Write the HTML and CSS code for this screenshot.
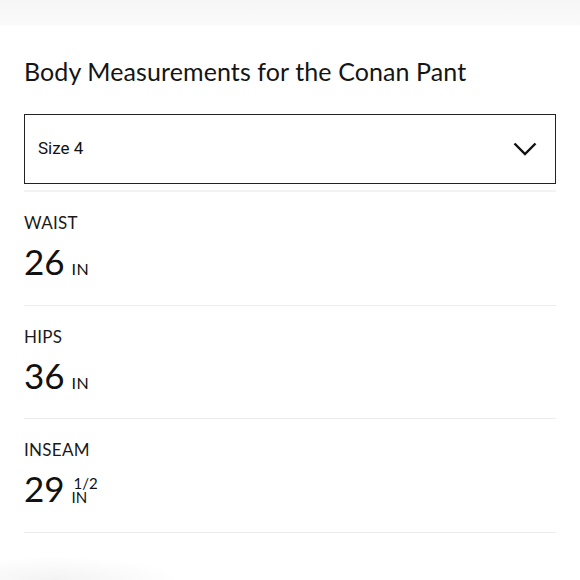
FILE: index.html
```html
<!DOCTYPE html>
<html>
<head>
<meta charset="utf-8">
<link rel="stylesheet" href="styles.css">
</head>
<body>
<div class="topband"></div>
<main class="panel">
  <h1 class="title">Body Measurements for the Conan Pant</h1>
  <div class="select">
    <span class="select-label">Size 4</span>
    <svg class="chev" width="24" height="14" viewBox="0 0 24 14"><path d="M1.5 1.5 L12 12 L22.5 1.5" fill="none" stroke="#111" stroke-width="2.4"/></svg>
  </div>
  <div class="rule first"></div>
  <section class="row">
    <div class="label">WAIST</div>
    <div class="value"><span class="num">26</span><span class="unit">IN</span></div>
  </section>
  <section class="row">
    <div class="label">HIPS</div>
    <div class="value"><span class="num">36</span><span class="unit">IN</span></div>
  </section>
  <section class="row">
    <div class="label">INSEAM</div>
    <div class="value"><span class="num">29</span><span class="frac"><span class="fr-top">1/2</span><span class="fr-bot">IN</span></span></div>
  </section>
</main>
<div class="bottomblob"></div>
</body>
</html>
```
FILE: styles.css
```css
* { box-sizing: border-box; }
html, body { margin: 0; padding: 0; background: #fff; }
body { width: 580px; height: 580px; overflow: hidden; position: relative; font-family: "Lato", "Liberation Sans", sans-serif; color: #111; }
.topband { height: 25px; background: linear-gradient(180deg, #f6f6f6, #fafafa); }
.panel { padding: 0 24px; }
.title { margin: 0; padding-top: 30px; font-weight: 400; font-size: 25px; line-height: 32px; letter-spacing: 0.1px; color: #151515; }
.select { margin-top: 27px; height: 70px; border: 1.5px solid #222; display: flex; align-items: center; justify-content: space-between; padding: 0 18px 0 13px; }
.select-label { font-family: "Roboto", "Liberation Sans", sans-serif; font-size: 17px; line-height: 20px; margin-top: -2px; color: #111; }
.chev { display: block; }
.rule.first { margin-top: 6px; height: 2px; background: #f3f3f3; }
.row { height: 113.5px; border-bottom: 1px solid #ececec; padding-top: 21px; }
.label { font-size: 17px; line-height: 20px; letter-spacing: 0.3px; color: #1a1a1a; }
.value { display: flex; align-items: flex-end; margin-top: 11px; height: 34px; }
.num { font-size: 35px; line-height: 34px; font-weight: 400; }
.unit { font-size: 16px; line-height: 16px; margin-left: 7px; margin-bottom: 1px; letter-spacing: 0.5px; }
.frac { display: flex; flex-direction: column; margin-left: 7px; margin-bottom: 1px; font-size: 15px; line-height: 14px; }
.fr-top { padding-left: 2px; }
.bottomblob { position: absolute; left: 0; bottom: 0; width: 180px; height: 24px; background: radial-gradient(ellipse at 30% 100%, #f3f3f3, rgba(255,255,255,0) 70%); }
```
